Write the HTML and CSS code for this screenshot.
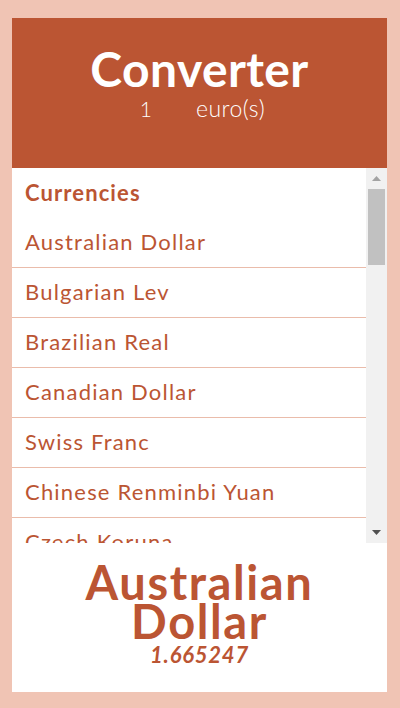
FILE: index.html
```html
<!DOCTYPE html>
<html lang="en">
<head>
<meta charset="utf-8">
<title>Converter</title>
<link rel="stylesheet" href="styles.css">
</head>
<body>
<main class="app">
  <header class="header">
    <h1 class="title">Converter</h1>
    <div class="amount-row">
      <input class="amount" type="text" value="1">
      <span class="unit">euro(s)</span>
    </div>
  </header>
  <section class="list-area">
    <div class="list">
      <div class="list-head">Currencies</div>
      <ul class="items">
        <li>Australian Dollar</li>
        <li>Bulgarian Lev</li>
        <li>Brazilian Real</li>
        <li>Canadian Dollar</li>
        <li>Swiss Franc</li>
        <li>Chinese Renminbi Yuan</li>
        <li>Czech Koruna</li>
        <li>Danish Krone</li>
        <li>British Pound</li>
        <li>Hong Kong Dollar</li>
        <li>Croatian Kuna</li>
        <li>Hungarian Forint</li>
        <li>Indonesian Rupiah</li>
        <li>Israeli New Sheqel</li>
        <li>Indian Rupee</li>
        <li>Icelandic Króna</li>
        <li>Japanese Yen</li>
        <li>South Korean Won</li>
        <li>Mexican Peso</li>
        <li>Malaysian Ringgit</li>
        <li>Norwegian Krone</li>
        <li>New Zealand Dollar</li>
        <li>Philippine Peso</li>
        <li>Polish Złoty</li>
        <li>Romanian Leu</li>
        <li>Russian Ruble</li>
        <li>Swedish Krona</li>
        <li>Singapore Dollar</li>
        <li>Thai Baht</li>
        <li>Turkish Lira</li>
        <li>United States Dollar</li>
        <li>South African Rand</li>
      </ul>
    </div>
    <div class="scrollbar" aria-hidden="true">
      <div class="sb-btn">
        <svg width="9" height="5" viewBox="0 0 9 5"><path d="M0 5 L4.5 0 L9 5 Z" fill="#a3a3a3"/></svg>
      </div>
      <div class="sb-track"><div class="sb-thumb"></div></div>
      <div class="sb-btn">
        <svg width="9" height="5" viewBox="0 0 9 5"><path d="M0 0 L4.5 5 L9 0 Z" fill="#505050"/></svg>
      </div>
    </div>
  </section>
  <section class="result">
    <div class="result-name">Australian Dollar</div>
    <div class="result-rate">1.665247</div>
  </section>
</main>
</body>
</html>
```

FILE: styles.css
```css
html, body {
  margin: 0;
  padding: 0;
}
body {
  background: #f0c4b4;
  font-family: Lato, "Open Sans", sans-serif;
  color: #bb5533;
}
.app {
  width: 375px;
  margin: 18px 13px 16px 12px;
  background: #ffffff;
  display: flex;
  flex-direction: column;
}
.header {
  background: #bb5533;
  color: #ffffff;
  height: 150px;
  box-sizing: border-box;
  padding-top: 27px;
  display: flex;
  flex-direction: column;
  align-items: center;
}
.title {
  margin: 0;
  font-size: 48px;
  font-weight: 700;
  line-height: 48px;
  letter-spacing: 0.4px;
}
.amount-row {
  display: flex;
  align-items: center;
  justify-content: center;
  margin-top: 2px;
}
.amount {
  width: 24px;
  margin-right: 38px;
  padding: 0;
  border: none;
  background: transparent;
  color: #ffffff;
  font-family: Lato, sans-serif;
  font-size: 21px;
  font-weight: 300;
  text-align: center;
  outline: none;
}
.unit {
  font-size: 23px;
  font-weight: 300;
  line-height: 26px;
  letter-spacing: 0.5px;
}
.list-area {
  height: 375px;
  display: flex;
}
.list {
  flex: 1;
  min-width: 0;
  overflow: hidden;
}
.list-head {
  height: 50px;
  padding-left: 13px;
  font-size: 22px;
  font-weight: 700;
  line-height: 50px;
  letter-spacing: 1.1px;
}
.items {
  list-style: none;
  margin: 0;
  padding: 0;
}
.items li {
  height: 49px;
  border-bottom: 1px solid #eabcab;
  padding-left: 13px;
  font-size: 22px;
  line-height: 48px;
  letter-spacing: 1.2px;
  white-space: nowrap;
}
.scrollbar {
  width: 21px;
  flex: none;
  background: #f1f1f1;
  display: flex;
  flex-direction: column;
}
.sb-btn {
  height: 21px;
  display: flex;
  align-items: center;
  justify-content: center;
}
.sb-btn svg {
  display: block;
}
.sb-track {
  flex: 1;
  padding: 0 2px;
}
.sb-thumb {
  height: 76px;
  background: #c1c1c1;
}
.result {
  height: 149px;
  box-sizing: border-box;
  padding-top: 20px;
  text-align: center;
}
.result-name {
  font-size: 47px;
  font-weight: 700;
  line-height: 39px;
  letter-spacing: 1.6px;
  padding: 0 50px;
}
.result-rate {
  margin-top: 3px;
  font-size: 22px;
  font-weight: 700;
  font-style: italic;
  line-height: 22px;
  letter-spacing: 0.8px;
}
```
